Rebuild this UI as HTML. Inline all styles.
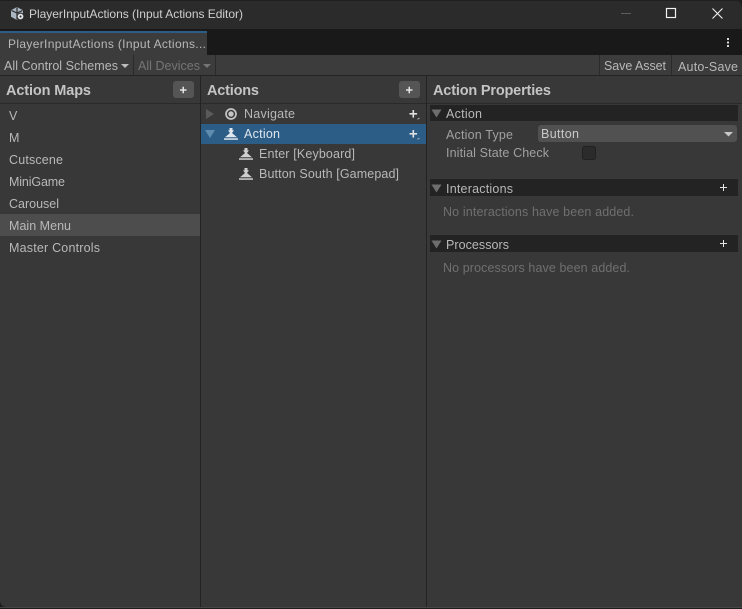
<!DOCTYPE html>
<html><head><meta charset="utf-8"><title>PlayerInputActions (Input Actions Editor)</title>
<style>
html,body{margin:0;padding:0;width:742px;height:609px;overflow:hidden;background:#383838}
svg{display:block}
text{font-family:"Liberation Sans",sans-serif;font-size:12.5px}
.h{font-size:14.5px;font-weight:bold;fill:#c4c4c4}
.t{fill:#b8b8b8}
.d{fill:#6f6f6f}
</style></head><body>
<svg width="742" height="609" viewBox="0 0 742 609" xmlns="http://www.w3.org/2000/svg">
<defs>
<g id="btn"><path d="M6.500 1h3v2.400h1.500L9 6l5 4.300H2L7 6 5 3.400h1.500z" fill="currentColor"/><rect x="1" y="11.300" width="14" height="1.500" fill="currentColor"/></g>
<g id="addb"><path d="M3.500 1h1.600v3h3v1.600h-3v3H3.500v-3h-3V4h3z" fill="#e0e0e0"/><path d="M8.500 9.800l2-1v1l-2 1z" fill="#bdbdbd"/></g>
</defs>
<rect width="742" height="609" fill="#1d1d1d"/>
<path d="M0 0H733Q742 0 742 9V29H0Z" fill="#2b2b2b"/>
<rect x="0" y="0" width="742" height="1" fill="#1f1f1f"/>
<!-- title icon -->
<path d="M17 7l6 3.200v6.600L17 20l-6-3.200v-6.600z" fill="#a9b6c2"/>
<path d="M17 7.500v5M11.500 10.500l5.500 2.500 5.500-2.500M17 13v6.500" stroke="#2b2b2b" stroke-width="1.200" fill="none"/>
<circle cx="20.500" cy="16.500" r="3.400" fill="#dfe4e8" stroke="#2b2b2b" stroke-width="1"/>
<circle cx="20.500" cy="16.500" r="1" fill="#2b2b2b"/>
<text x="29" y="18" textLength="214" style="font-size:12px" fill="#cfcfcf">PlayerInputActions (Input Actions Editor)</text>
<!-- window controls -->
<rect x="621" y="13" width="10" height="1" fill="#5c5c5c"/>
<rect x="666.500" y="8.500" width="9" height="9" fill="none" stroke="#f0f0f0" stroke-width="1.200"/>
<path d="M712.500 8.500l10 10M722.500 8.500l-10 10" stroke="#f0f0f0" stroke-width="1.100" fill="none"/>
<!-- tab bar -->
<rect x="0" y="29" width="742" height="26" fill="#191919"/>
<rect x="0" y="31" width="207" height="24" fill="#3c3c3c"/>
<rect x="0" y="31" width="207" height="2" fill="#2c5d87"/>
<text x="8" y="48" textLength="198" style="font-size:12px" fill="#b8b8b8">PlayerInputActions (Input Actions...</text>
<rect x="727" y="38" width="2" height="2" fill="#d8d8d8"/><rect x="727" y="41.500" width="2" height="2" fill="#d8d8d8"/><rect x="727" y="45" width="2" height="2" fill="#d8d8d8"/>
<!-- toolbar -->
<rect x="0" y="55" width="742" height="20" fill="#3c3c3c"/>
<rect x="0" y="75" width="742" height="1" fill="#232323"/>
<text x="4" y="70" textLength="114" class="t">All Control Schemes</text>
<path d="M121 64h8l-4 4z" fill="#bdbdbd"/>
<rect x="133" y="55" width="1" height="20" fill="#2a2a2a"/>
<text x="138" y="70" textLength="62" class="d" style="fill:#757575">All Devices</text>
<path d="M203 64h8l-4 4z" fill="#757575"/>
<rect x="215" y="55" width="1" height="20" fill="#2a2a2a"/>
<rect x="599" y="55" width="1" height="20" fill="#2a2a2a"/>
<rect x="671" y="55" width="1" height="20" fill="#2a2a2a"/>
<text x="604" y="70" textLength="62" class="t">Save Asset</text>
<text x="678" y="71" textLength="60" class="t">Auto-Save</text>
<!-- panels -->
<rect x="0" y="76" width="742" height="531" fill="#383838"/>
<rect x="0" y="103" width="742" height="1" fill="#2a2a2a"/>
<rect x="200" y="76" width="1" height="531" fill="#232323"/>
<rect x="426" y="76" width="1" height="531" fill="#232323"/>
<path d="M0 607V600Q0 607 7 607Z" fill="#1d1d1d"/>
<rect x="0" y="607" width="742" height="1" fill="#474747"/>
<!-- column headers -->
<text x="6" y="95" textLength="85" class="h">Action Maps</text>
<rect x="173" y="81" width="21" height="17" rx="3" fill="#555"/>
<path d="M180 90h6.500M183.250 86.750v6.500" stroke="#e4e4e4" stroke-width="1.500"/>
<text x="207" y="95" textLength="52" class="h">Actions</text>
<rect x="399" y="81" width="21" height="17" rx="3" fill="#555"/>
<path d="M406 90h6.500M409.250 86.750v6.500" stroke="#e4e4e4" stroke-width="1.500"/>
<text x="433" y="95" textLength="118" class="h">Action Properties</text>
<!-- left list -->
<rect x="0" y="214" width="200" height="22" fill="#4d4d4d"/>
<text x="9" y="120" class="t">V</text>
<text x="9" y="142" class="t">M</text>
<text x="9" y="164" textLength="54" class="t">Cutscene</text>
<text x="9" y="186" textLength="56" class="t">MiniGame</text>
<text x="9" y="208" textLength="50" class="t">Carousel</text>
<text x="9" y="230" textLength="62" class="t">Main Menu</text>
<text x="9" y="252" textLength="91" class="t">Master Controls</text>
<!-- actions tree -->
<rect x="201" y="124" width="225" height="20" fill="#2c5d87"/>
<path d="M206 109l8 5-8 5z" fill="#5a5a5a"/>
<circle cx="231" cy="114" r="5" fill="none" stroke="#c4c4c4" stroke-width="1.700"/><circle cx="231" cy="114" r="2.700" fill="#c4c4c4"/>
<text x="244" y="118" textLength="51" class="t">Navigate</text>
<use href="#addb" x="409" y="109"/>
<path d="M205 130h10l-5 8z" fill="#5f8cae"/>
<use href="#btn" x="223" y="127" color="#dfe6ec"/>
<text x="244" y="138" textLength="36" fill="#dfe6ec">Action</text>
<use href="#addb" x="409" y="129"/>
<use href="#btn" x="238" y="147" color="#cfcfcf"/>
<text x="259" y="158" textLength="96" class="t">Enter [Keyboard]</text>
<use href="#btn" x="238" y="167" color="#cfcfcf"/>
<text x="259" y="178" textLength="140" class="t">Button South [Gamepad]</text>
<!-- properties -->
<rect x="430" y="105" width="308" height="16" fill="#232323"/>
<path d="M431.500 109.500h10l-5 8z" fill="#6e6e6e"/>
<text x="446" y="118" textLength="36" class="t">Action</text>
<text x="446" y="139" textLength="67" fill="#a0a0a0">Action Type</text>
<rect x="538" y="125" width="199" height="17" rx="3" fill="#515151"/>
<text x="541" y="138" textLength="38" fill="#c8c8c8">Button</text>
<path d="M724 132h9l-4.500 4.500z" fill="#c8c8c8"/>
<text x="446" y="157" textLength="103" fill="#a0a0a0">Initial State Check</text>
<rect x="582.500" y="146.500" width="13" height="13" rx="2" fill="#2b2b2b" stroke="#212121"/>
<rect x="430" y="179" width="308" height="17" fill="#232323"/>
<path d="M431.500 184.500h10l-5 8z" fill="#6e6e6e"/>
<text x="446" y="193" textLength="67" class="t">Interactions</text>
<path d="M720 187.500h7M723.500 184v7" stroke="#e4e4e4" stroke-width="1"/>
<text x="443" y="216" textLength="191" class="d">No interactions have been added.</text>
<rect x="430" y="235" width="308" height="17" fill="#232323"/>
<path d="M431.500 240.500h10l-5 8z" fill="#6e6e6e"/>
<text x="446" y="249" textLength="63" class="t">Processors</text>
<path d="M720 243.500h7M723.500 240v7" stroke="#e4e4e4" stroke-width="1"/>
<text x="443" y="272" textLength="187" class="d">No processors have been added.</text>
</svg>
</body></html>
